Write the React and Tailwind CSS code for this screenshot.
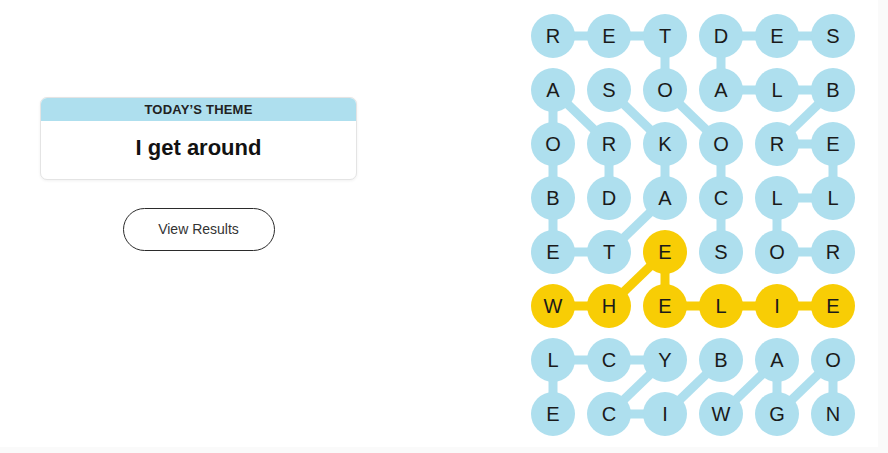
const LETTERS = [
  "RETDES",
  "ASOALB",
  "ORKORE",
  "BDACLL",
  "ETESOR",
  "WHELIE",
  "LCYBAO",
  "ECIWGN",
];

// [row, col] pairs
const FOUND_LINKS = [
  [[0, 0], [0, 1]], [[0, 1], [0, 2]], [[0, 2], [1, 2]], [[1, 2], [2, 3]],
  [[2, 3], [3, 3]], [[3, 3], [4, 3]],
  [[0, 3], [0, 4]], [[0, 4], [0, 5]], [[0, 3], [1, 3]], [[1, 3], [1, 4]],
  [[1, 4], [1, 5]], [[1, 5], [2, 4]], [[2, 4], [2, 5]], [[2, 5], [3, 5]],
  [[3, 4], [3, 5]], [[3, 4], [4, 4]], [[4, 4], [4, 5]],
  [[1, 1], [2, 2]], [[2, 2], [3, 2]], [[3, 2], [4, 1]], [[4, 1], [4, 0]],
  [[4, 0], [3, 0]], [[3, 0], [2, 0]], [[2, 0], [1, 0]], [[1, 0], [2, 1]],
  [[2, 1], [3, 1]],
  [[6, 3], [7, 2]], [[7, 2], [7, 1]], [[7, 1], [6, 2]], [[6, 2], [6, 1]],
  [[6, 1], [6, 0]], [[6, 0], [7, 0]],
  [[7, 3], [6, 4]], [[6, 4], [7, 4]], [[7, 4], [6, 5]], [[6, 5], [7, 5]],
];

const SPANGRAM_LINKS = [
  [[5, 0], [5, 1]], [[5, 1], [4, 2]], [[4, 2], [5, 2]], [[5, 2], [5, 3]],
  [[5, 3], [5, 4]], [[5, 4], [5, 5]],
];

const BLUE = "#aedfee";
const YELLOW = "#f8cd05";

const cx = (c) => 22 + c * 56;
const cy = (r) => 22 + r * 54;

function Board() {
  return (
    <div className="relative">
      <svg
        className="absolute inset-0"
        width="324"
        height="422"
        viewBox="0 0 324 422"
      >
        {FOUND_LINKS.map(([a, b], i) => (
          <line
            key={"f" + i}
            x1={cx(a[1])}
            y1={cy(a[0])}
            x2={cx(b[1])}
            y2={cy(b[0])}
            stroke={BLUE}
            strokeWidth="9"
          />
        ))}
        {SPANGRAM_LINKS.map(([a, b], i) => (
          <line
            key={"s" + i}
            x1={cx(a[1])}
            y1={cy(a[0])}
            x2={cx(b[1])}
            y2={cy(b[0])}
            stroke={YELLOW}
            strokeWidth="9"
          />
        ))}
      </svg>

      <div className="relative grid grid-cols-6 gap-x-[12px] gap-y-[10px]">
        {LETTERS.map((row, r) =>
          row.split("").map((ch, c) => (
            <button
              key={`${r}-${c}`}
              className={`w-[44px] h-[44px] rounded-full flex items-center justify-center text-[20px] text-[#1a1a1a] ${
                r === 5 || (r === 4 && c === 2) ? "bg-[#f8cd05]" : "bg-[#aedfee]"
              }`}
            >
              {ch}
            </button>
          ))
        )}
      </div>
    </div>
  );
}

function ThemeCard() {
  return (
    <div className="w-[317px] rounded-[7px] border border-[#e4e4e4] bg-white shadow-[0_1px_3px_rgba(0,0,0,0.06)] overflow-hidden">
      <div className="h-[23px] bg-[#aedfee] flex items-center justify-center text-[13px] font-bold text-[#222] tracking-[0.2px]">
        TODAY’S THEME
      </div>
      <div className="h-[58px] pb-[6px] flex items-center justify-center text-[22px] font-bold text-[#121212]">
        I get around
      </div>
    </div>
  );
}

export default function App() {
  return (
    <div className="w-[888px] h-[453px] bg-[#fafafa] font-['Liberation_Sans',Arial,sans-serif]">
      <div className="w-[878px] h-[447px] bg-white flex">
        <div className="ml-[40px] mt-[97px] w-[317px] flex flex-col items-center">
          <ThemeCard />
          <button className="mt-[28px] w-[152px] h-[43px] rounded-full border border-[#2b2b2b] text-[14px] text-[#333]">
            View Results
          </button>
        </div>
        <div className="ml-[174px] mt-[14px]">
          <Board />
        </div>
      </div>
    </div>
  );
}
